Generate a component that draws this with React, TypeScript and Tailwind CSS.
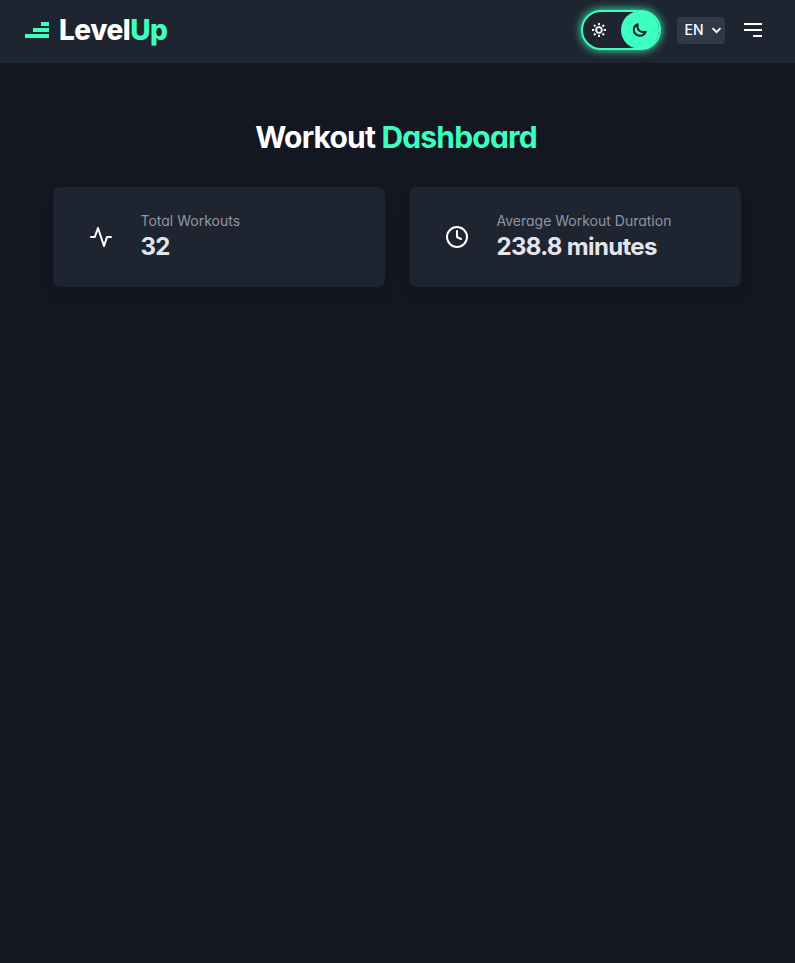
import React from 'react';

function Logo() {
  return (
    <div className="flex items-center gap-[10px]">
      <div className="flex w-6 flex-col items-end gap-[2px]">
        <span className="h-1 w-2 bg-[#3dffc0]" />
        <span className="h-1 w-4 bg-[#3dffc0]" />
        <span className="h-1 w-6 bg-[#3dffc0]" />
      </div>
      <span className="text-[28px] leading-8 font-extrabold tracking-[-0.018em] text-white">
        Level<span className="text-[#3dffc0]">Up</span>
      </span>
    </div>
  );
}

function ThemeToggle() {
  return (
    <button className="flex h-10 w-20 items-center justify-between rounded-full border-2 border-[#3dffc0] shadow-[0_0_10px_#3dffc0]">
      <svg className="ml-[9px]" width="14" height="14" viewBox="0 0 14 14" fill="none" stroke="white" strokeWidth="1.8">
        <circle cx="7" cy="7" r="2.8" />
        <path d="M7 0v2.200M7 11.800v2.200M0 7h2.200M11.800 7h2.200M2 2l1.500 1.500M10.500 10.500l1.500 1.500M2 12l1.500-1.500M10.500 3.500l1.500-1.500" />
      </svg>
      <span className="flex h-[38px] w-[38px] items-center justify-center rounded-full bg-[#3dffc0]">
        <svg width="16" height="16" viewBox="0 0 16 16" fill="none" stroke="#1e2530" strokeWidth="2" strokeLinejoin="round">
          <path d="M5.700 2.200C3.300 3 1.800 5 1.800 7.700c0 3.500 2.700 6.100 6 6.100 2.800 0 5-1.600 5.900-4.100-3.200.7-5.200.2-6.600-1.200C5.500 6.900 5.100 4.800 5.700 2.200Z" />
        </svg>
      </span>
    </button>
  );
}

function Header() {
  return (
    <header className="flex h-[63px] items-center justify-between bg-[#1e2530] pr-[33px] pb-[3px] pl-[25px]">
      <Logo />
      <div className="flex items-center gap-4">
        <ThemeToggle />
        <button className="flex h-[27px] w-12 items-center justify-between rounded bg-[#303948] pr-[3px] pl-[7.500px] text-sm font-medium text-white">
          EN
          <svg width="11" height="7" viewBox="0 0 11 7" fill="none" stroke="white" strokeWidth="1.8">
            <path d="M1.500 1.200 5.500 5.200 9.500 1.200" />
          </svg>
        </button>
        <button className="ml-[3px] flex w-[18px] flex-col items-end gap-1">
          <span className="h-[2px] w-[18px] bg-white" />
          <span className="h-[2px] w-[18px] bg-white" />
          <span className="h-[2px] w-[9px] bg-white" />
        </button>
      </div>
    </header>
  );
}

function PulseIcon() {
  return (
    <svg width="24" height="24" viewBox="0 0 24 24" fill="none" stroke="currentColor" strokeWidth="2" strokeLinecap="round" strokeLinejoin="round">
      <path d="M2 12h3.800L9 3l6 18 3-9h4" />
    </svg>
  );
}

function ClockIcon() {
  return (
    <svg width="24" height="24" viewBox="0 0 24 24" fill="none" stroke="currentColor" strokeWidth="2" strokeLinecap="round" strokeLinejoin="round">
      <circle cx="12" cy="12" r="10" />
      <path d="M12 6v6l4 2" />
    </svg>
  );
}

function StatCard({ icon, label, value }: { icon: React.ReactNode; label: string; value: string }) {
  return (
    <div className="flex h-[100px] items-center rounded-lg bg-[#1e2530] pl-9 text-white shadow-[0_10px_15px_-3px_rgba(0,0,0,0.1)]">
      {icon}
      <div className="ml-[27.500px]">
        <p className="text-sm leading-5 text-[#9295a1]">{label}</p>
        <p className="text-2xl leading-8 font-bold tracking-[-0.028em] text-[#e4e4eb]">{value}</p>
      </div>
    </div>
  );
}

export default function App() {
  return (
    <div className="h-[963px] w-full overflow-hidden bg-[#131722] font-['Inter','Liberation_Sans',sans-serif] [font-feature-settings:'cv11']">
      <Header />
      <main className="px-[53px] pt-14">
        <h1 className="pr-[3px] text-center text-[30px] leading-9 font-bold tracking-[-0.027em] text-white">
          Workout <span className="text-[#3dffc0]">Dashboard</span>
        </h1>
        <div className="mt-8 grid grid-cols-[332px_332px] gap-6">
          <StatCard icon={<PulseIcon />} label="Total Workouts" value="32" />
          <StatCard icon={<ClockIcon />} label="Average Workout Duration" value="238.8 minutes" />
        </div>
      </main>
    </div>
  );
}
